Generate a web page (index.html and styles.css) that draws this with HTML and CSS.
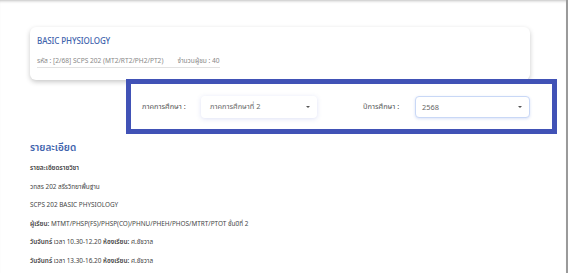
FILE: index.html
```html
<!DOCTYPE html>
<html lang="th">
<head>
    <meta charset="UTF-8">
    <title>BASIC PHYSIOLOGY</title>
    <link rel="stylesheet" href="styles.css">
</head>
<body>
    <div class="page">
        <div class="course-card">
            <h1 class="course-title">BASIC PHYSIOLOGY</h1>
            <div class="course-meta">
                <span>รหัส : [2/68] SCPS 202 (MT2/RT2/PH2/PT2)</span>
                <span class="meta-count">จำนวนผู้ชม : 40</span>
            </div>
        </div>

        <div class="filter-box">
            <label class="filter-label label-term">ภาคการศึกษา :</label>
            <div class="select select-term">
                <span>ภาคการศึกษาที่ 2</span>
                <span class="caret"></span>
            </div>
            <div class="spacer"></div>
            <label class="filter-label label-year">ปีการศึกษา :</label>
            <div class="select select-year">
                <span>2568</span>
                <span class="caret"></span>
            </div>
        </div>

        <section class="details">
            <h2>รายละเอียด</h2>
            <p><b>รายละเอียดรายวิชา</b></p>
            <p>วทสร 202 สรีรวิทยาพื้นฐาน</p>
            <p>SCPS 202 BASIC PHYSIOLOGY</p>
            <p><b>ผู้เรียน:</b> MTMT/PHSP(FS)/PHSP(CO)/PHNU/PHEH/PHOS/MTRT/PTOT ชั้นปีที่ 2</p>
            <p><b>วันจันทร์</b> เวลา 10.30-12.20 <b>ห้องเรียน:</b> ศ.ชัชวาล</p>
            <p><b>วันจันทร์</b> เวลา 13.30-16.20 <b>ห้องเรียน:</b> ศ.ชัชวาล</p>
        </section>
    </div>
</body>
</html>
```

FILE: styles.css
```css
body {
    margin: 0;
    padding: 0;
    background: #fff;
    color: #444;
    font-family: "Noto Sans", "Noto Sans Thai", sans-serif;
}
.page {
    height: 273px;
    box-sizing: border-box;
    padding: 27px 0 0 30px;
    border-right: 2px solid #9a9a9a;
    box-shadow: inset 0 3px 3px -2px rgba(0,0,0,0.25);
    overflow: hidden;
}
.course-card {
    width: 500px;
    height: 53px;
    box-sizing: border-box;
    padding: 9px 7px 0;
    background: #fff;
    border-radius: 6px;
    box-shadow: 0 2px 5px rgba(0,0,0,0.22);
}
.course-title {
    margin: 0;
    font-size: 8px;
    font-weight: 500;
    color: #3f64ad;
    line-height: 10px;
    letter-spacing: -0.1px;
}
.course-meta {
    display: inline-flex;
    gap: 14px;
    margin-top: 3px;
    padding-bottom: 2px;
    border-bottom: 1px solid #e2e2e2;
    font-size: 6.6px;
    line-height: 9px;
    color: #888;
}
.filter-box {
    position: relative;
    display: flex;
    align-items: center;
    width: 431px;
    height: 55px;
    box-sizing: border-box;
    margin: -1px 0 0 96px;
    padding: 0 22px 0 11px;
    border: 5px solid #4152b6;
    background: #fff;
}
.filter-label {
    font-size: 7.4px;
    color: #555;
    white-space: nowrap;
}
.label-term {
    width: 49px;
}
.label-year {
    width: 40px;
}
.select {
    display: flex;
    align-items: center;
    justify-content: space-between;
    height: 22px;
    box-sizing: border-box;
    padding: 0 7px 0 9px;
    background: #fff;
    border-radius: 4px;
    font-size: 7.4px;
    color: #666;
}
.select-term {
    width: 116px;
    margin-left: 10px;
    box-shadow: 0 1px 5px rgba(70,90,200,0.18);
}
.select-year {
    width: 115px;
    margin-left: 12px;
    padding-left: 6px;
    border: 1px solid #c9d8f6;
    box-shadow: 0 1px 3px rgba(70,110,220,0.2);
}
.caret {
    width: 0;
    height: 0;
    border-left: 2px solid transparent;
    border-right: 2px solid transparent;
    border-top: 2px solid #555;
}
.spacer {
    flex: 1;
}
.details {
    padding-top: 6px;
}
.details h2 {
    margin: 0 0 5px;
    font-size: 10px;
    line-height: 14px;
    color: #3f64ad;
    font-weight: 600;
}
.details p {
    margin: 0;
    font-size: 6.4px;
    line-height: 18.6px;
    color: #444;
}
.details b {
    font-weight: 600;
}
```
